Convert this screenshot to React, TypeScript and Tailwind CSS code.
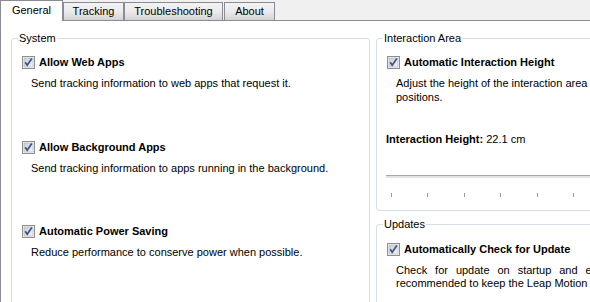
import React from "react";

function Check() {
  return (
    <svg width="13" height="13" viewBox="0 0 13 13" className="shrink-0">
      <defs>
        <linearGradient id="cbg" x1="0" y1="0" x2="1" y2="1">
          <stop offset="0" stopColor="#c9ced6" />
          <stop offset="1" stopColor="#f3f4f6" />
        </linearGradient>
      </defs>
      <rect x="0.5" y="0.5" width="12" height="12" fill="#f4f4f4" stroke="#8e8f8f" />
      <rect x="2" y="2" width="9" height="9" fill="url(#cbg)" stroke="#b0b5bd" strokeWidth="0.6" />
      <path d="M3.2 6.2 L5.2 9.2 L9.8 2.6" fill="none" stroke="#3f5189" strokeWidth="1.7" strokeLinejoin="miter" />
    </svg>
  );
}

function Item({ label, desc, className }: { label: string; desc: string; className?: string }) {
  return (
    <div className={className}>
      <div className="flex h-[13px] items-center gap-[4px]">
        <Check />
        <span className="font-bold leading-[13px]">{label}</span>
      </div>
      <div className="mt-[7px] pl-[9px] leading-[14px] whitespace-nowrap">{desc}</div>
    </div>
  );
}

function Tab({ label, w }: { label: string; w: string }) {
  return (
    <div
      className={`${w} h-[19px] border border-[#898c95] bg-gradient-to-b from-[#f3f3f3] via-[#ebebeb] to-[#d4d4d4] flex items-center justify-center leading-[13px]`}
    >
      {label}
    </div>
  );
}

export default function App() {
  return (
    <div className="w-[590px] h-[302px] overflow-hidden bg-[#f0f0f0] text-[11px] text-black font-['Tahoma','Liberation_Sans',sans-serif] flex flex-col">
      <div className="flex h-[21px] items-end shrink-0">
        <div className="w-[63px] h-[21px] border-l border-t border-r border-[#898c95] bg-white flex items-center justify-center pb-[1px] leading-[13px]">
          General
        </div>
        <Tab label="Tracking" w="w-[61px]" />
        <Tab label="Troubleshooting" w="w-[99px]" />
        <div className="w-px h-[19px] border-b border-[#898c95]" />
        <Tab label="About" w="w-[51px]" />
        <div className="flex-1 h-[19px] border-b border-[#898c95]" />
      </div>
      <div className="flex-1 bg-white border-l border-[#898c95] pl-[10px] pt-[11px] flex">
        <fieldset className="w-[359px] h-[300px] shrink-0 border border-[#d5dfe5] rounded-[3px]">
          <legend className="ml-[6px] px-[1px] leading-[13px]">System</legend>
          <div className="pl-[10px] pt-[11px]">
            <Item label="Allow Web Apps" desc="Send tracking information to web apps that request it." />
            <Item className="mt-[51px]" label="Allow Background Apps" desc="Send tracking information to apps running in the background." />
            <Item className="mt-[50px]" label="Automatic Power Saving" desc="Reduce performance to conserve power when possible." />
          </div>
        </fieldset>
        <div className="ml-[6px] w-[359px] shrink-0 flex flex-col">
          <fieldset className="h-[179px] border border-[#d5dfe5] rounded-[3px]">
            <legend className="ml-[6px] px-[1px] leading-[13px]">Interaction Area</legend>
            <div className="pl-[10px] pt-[11px]">
              <div className="flex h-[13px] items-center gap-[4px]">
                <Check />
                <span className="font-bold leading-[13px]">Automatic Interaction Height</span>
              </div>
              <div className="mt-[7px] pl-[9px] pr-[8px] leading-[14px]">
                Adjust the height of the interaction area based on your hand positions.
              </div>
              <div className="mt-[28px] -ml-px leading-[14px]">
                <span className="font-bold">Interaction Height:</span> 22.1 cm
              </div>
              <div className="mt-[29px] -ml-px h-[3px] border-t border-[#a9a9a9] bg-[#e3e3e3]" />
              <div className="mt-[15px] ml-[4px] flex gap-[35.4px]">
                {[0, 1, 2, 3, 4, 5, 6, 7, 8].map((i) => (
                  <div key={i} className="w-px h-[4px] bg-[#9a9a9a]" />
                ))}
              </div>
            </div>
          </fieldset>
          <fieldset className="mt-[7px] h-[200px] border border-[#d5dfe5] rounded-[3px]">
            <legend className="ml-[6px] px-[1px] leading-[13px]">Updates</legend>
            <div className="pl-[10px] pt-[12px]">
              <div className="flex h-[13px] items-center gap-[4px]">
                <Check />
                <span className="font-bold leading-[13px]">Automatically Check for Update</span>
              </div>
              <div className="mt-[8px] pl-[9px] pr-[33px] leading-[13px] text-justify">
                Check for update on startup and every 24 hours. It is recommended to keep the Leap Motion software up to date.
              </div>
            </div>
          </fieldset>
        </div>
      </div>
    </div>
  );
}
